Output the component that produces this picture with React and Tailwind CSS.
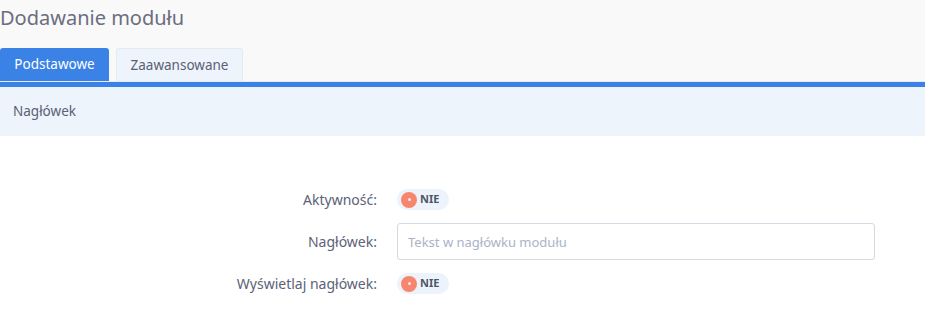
import React from "react";

const Toggle = () => (
  <div className="flex h-[21px] w-[52px] items-center gap-[3px] rounded-full bg-[#edf3fa] pl-[4px]">
    <span className="flex h-[16px] w-[16px] items-center justify-center rounded-full bg-[#f7866f]">
      <span className="h-[3px] w-[3px] rounded-full bg-white/80" />
    </span>
    <span className="text-[11px] font-bold text-[#4d5668]">NIE</span>
  </div>
);

const FormRow = ({ label, children }) => (
  <div className="flex items-center">
    <label className="w-[377px] text-right text-[14px] text-[#5c6277]">{label}</label>
    <div className="ml-[20px] flex-1">{children}</div>
  </div>
);

export default function App() {
  return (
    <div className="h-[326px] w-[925px] overflow-hidden bg-white font-['Noto_Sans',sans-serif]">
      <div className="bg-[#f9f9f9]">
        <h1 className="pt-[4px] text-[20px] leading-[28px] text-[#6a6e80]">Dodawanie modułu</h1>
        <div className="mt-[16px] flex gap-[7px]">
          <div className="flex h-[33px] w-[109px] items-center justify-center rounded-t-[3px] bg-[#3b82e6] text-[13.5px] text-white">
            Podstawowe
          </div>
          <div className="flex h-[33px] w-[127px] items-center justify-center rounded-t-[3px] border border-b-0 border-[#e6ebf1] bg-[#eef4fc] text-[13.5px] text-[#5b6074]">
            Zaawansowane
          </div>
        </div>
      </div>
      <div className="h-[6px] border-t border-[#e8ecf2] bg-[#3b82e6]" />
      <div className="flex h-[49px] items-center bg-[#edf4fc] px-[13px] text-[13.5px] text-[#5b6074]">Nagłówek</div>
      <div className="flex flex-col gap-[13px] pt-[53px]">
        <FormRow label="Aktywność:">
          <Toggle />
        </FormRow>
        <FormRow label="Nagłówek:">
          <input
            className="h-[37px] w-[478px] rounded-[3px] border border-[#d5d9e3] px-[10px] text-[13px] text-[#5b6074] outline-none placeholder:text-[#aab3c7]"
            placeholder="Tekst w nagłówku modułu"
          />
        </FormRow>
        <FormRow label="Wyświetlaj nagłówek:">
          <Toggle />
        </FormRow>
      </div>
    </div>
  );
}
